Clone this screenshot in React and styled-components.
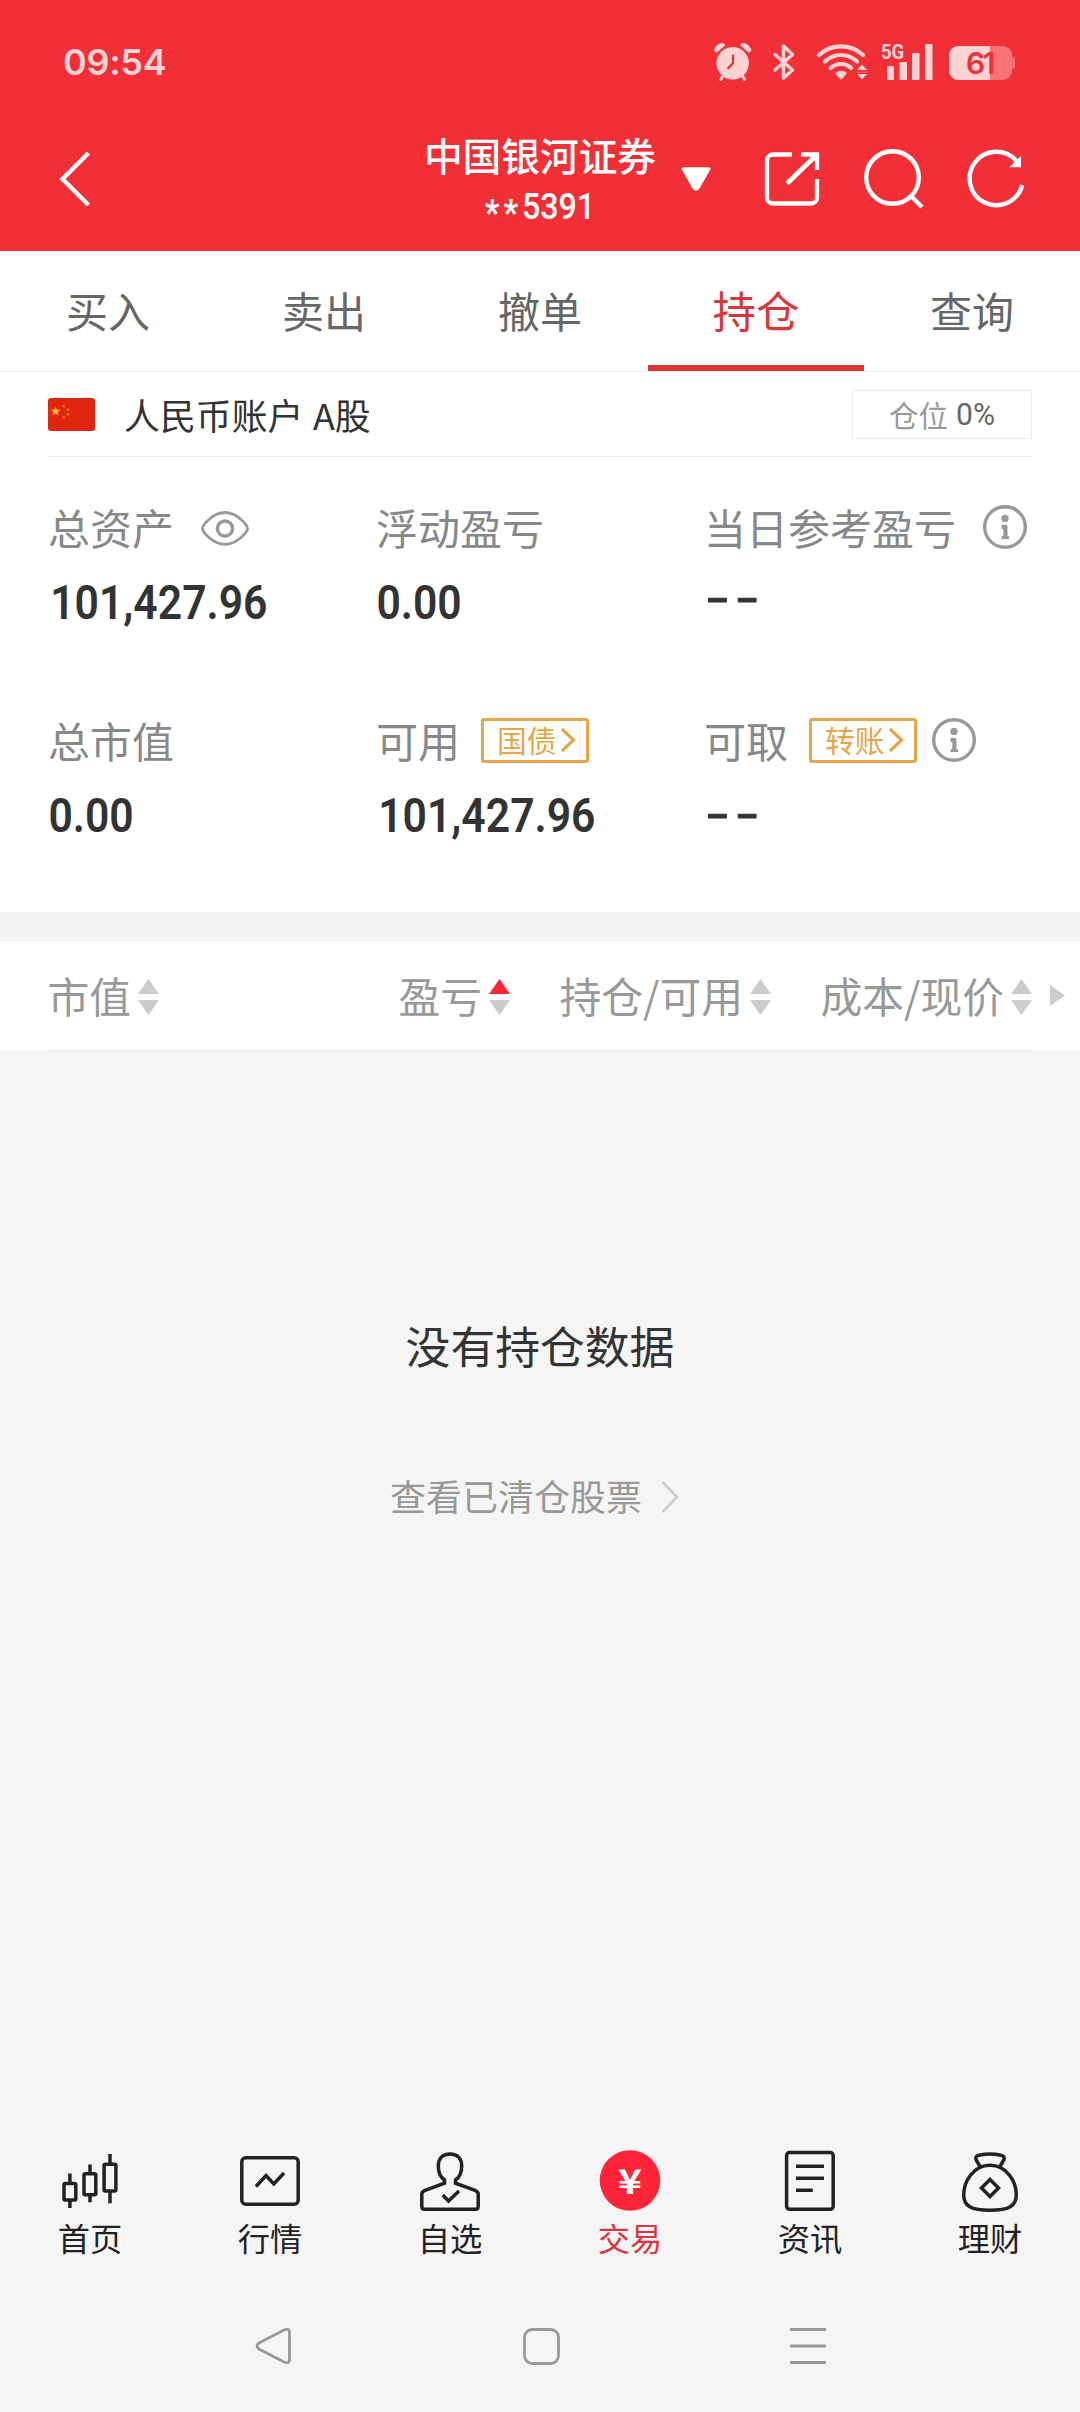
import React from "react";
import styled, { createGlobalStyle } from "styled-components";

const cjk = `"Noto Sans CJK SC", sans-serif`;
const latin = `Roboto, "Noto Sans CJK SC", sans-serif`;

const GlobalStyle = createGlobalStyle`
  *, *::before, *::after { box-sizing: border-box; }
  body { margin: 0; background: #f5f5f5; font-family: ${cjk}; }
  svg { display: block; flex: none; overflow: visible; }
`;

const Screen = styled.div`
  width: 1080px;
  height: 2412px;
  display: flex;
  flex-direction: column;
  background: #f5f5f5;
  overflow: hidden;
`;

/* ---------- header ---------- */
const Header = styled.header`
  height: 251px;
  background: #f22f37;
  color: #fff;
`;

const StatusBar = styled.div`
  height: 107px;
  padding: 17px 65px 0 63px;
  display: flex;
  align-items: center;
  color: #ffd2d4;
`;

const Clock = styled.span`
  flex: 1;
  font: 600 36px/44px Inter, sans-serif;
  letter-spacing: -0.3px;
`;

const StatusIcons = styled.div`
  display: flex;
  align-items: center;
  & > svg + svg { margin-left: 20px; }
`;

const Signal = styled.div`
  position: relative;
  width: 52px;
  height: 38px;
  margin-left: 15px;
`;

const NetworkType = styled.span`
  position: absolute;
  left: 0;
  top: -1px;
  font: 700 21px/20px Roboto, sans-serif;
  transform: scaleX(0.88);
  transform-origin: left;
`;

const Battery = styled.div`
  position: relative;
  width: 63px;
  height: 34px;
  margin: 2px 3px 0 16px;
  padding-right: 2px;
  border-radius: 9px;
  background: linear-gradient(to right, #ffd2d4 41px, #f87278 41px);
  color: #f22f37;
  font: 600 30px/35px Inter, sans-serif;
  letter-spacing: -2.5px;
  text-align: center;
  &::after {
    content: "";
    position: absolute;
    right: -3px;
    top: 11px;
    width: 3px;
    height: 12px;
    border-radius: 0 3px 3px 0;
    background: #f87278;
  }
`;

const NavRow = styled.div`
  height: 144px;
  padding: 0 51px 0 58px;
  display: flex;
  align-items: center;
`;

const AccountTitle = styled.div`
  width: 236px;
  margin: 2px 23px 0 330px;
  text-align: center;
`;

const BrokerName = styled.div`
  font: 500 38.7px/50px ${cjk};
  white-space: nowrap;
`;

const AccountNo = styled.div`
  margin-top: 3px;
  font: 500 36.8px/50px ${latin};
  transform: scaleX(0.875);
`;

const Mask = styled.span`
  font-weight: 700;
  letter-spacing: 4.5px;
  vertical-align: -6px;
  line-height: 1px;
`;

const NavActions = styled.div`
  display: flex;
  align-items: center;
  gap: 39px;
  margin-left: 52px;
`;

/* ---------- tabs ---------- */
const Tabs = styled.nav`
  height: 121px;
  display: grid;
  grid-template-columns: repeat(5, 1fr);
  background: #fff;
  border-bottom: 1px solid #ebebeb;
`;

const Tab = styled.div`
  padding-top: 28px;
  text-align: center;
  font-size: ${(p) => (p.$active ? 43.5 : 42)}px;
  line-height: 62px;
  color: ${(p) => (p.$active ? "#d93838" : "#666")};
  border-bottom: 6px solid ${(p) => (p.$active ? "#d93838" : "transparent")};
`;

/* ---------- account summary ---------- */
const Summary = styled.section`
  height: 540px;
  padding: 0 48px;
  background: #fff;
`;

const AccountRow = styled.div`
  height: 85px;
  display: flex;
  align-items: center;
  border-bottom: 1px solid #ebebeb;
`;

const AccountName = styled.span`
  flex: 1;
  margin-left: 29px;
  font-size: 35.9px;
  line-height: 50px;
  word-spacing: 1.5px;
  color: #333;
`;

const PositionBox = styled.div`
  width: 180px;
  height: 49px;
  border: 1px solid #ebebeb;
  padding-left: 36px;
  display: flex;
  align-items: center;
  gap: 8px;
  font-size: 29.5px;
  line-height: 40px;
  color: #999;
`;

const Percent = styled.span`
  font: 400 32px/40px ${latin};
  color: #666;
  transform: scaleX(0.94);
  transform-origin: left;
`;

const Metrics = styled.div`
  display: grid;
  grid-template-columns: repeat(3, 328px);
`;

const Metric = styled.div`
  height: 213px;
  padding-top: 47px;
`;

const MetricLabel = styled.div`
  height: 46px;
  display: flex;
  align-items: center;
  font-size: 42px;
  line-height: 46px;
  color: #888;
  white-space: nowrap;
`;

const LabelText = styled.span`
  width: ${(p) => (p.$width ? `${p.$width}px` : "auto")};
`;

const MetricValue = styled.div`
  margin-top: 24px;
  padding-left: ${(p) => (p.$indent ? 2.5 : 0.5)}px;
  font: 600 48.5px/58px ${latin};
  color: #333;
  transform: scaleX(0.88);
  transform-origin: left;
`;

const EmptyValue = styled.div`
  margin: ${(p) => p.$top}px 0 0 -6px;
  font: 400 48px/58px "Liberation Mono", monospace;
  letter-spacing: -6.8px;
  color: #333;
  -webkit-text-stroke: 0.8px #333;
  transform: scaleX(1.35);
  transform-origin: left;
`;

const Tag = styled.span`
  width: 108px;
  height: 45px;
  padding: 0 10px 0 13px;
  display: flex;
  align-items: center;
  justify-content: space-between;
  border: 3px solid #e5a549;
  border-radius: 3px;
  color: #e5a549;
  font-size: 29.8px;
  line-height: 36px;
`;

const TagText = styled.span`
  margin-top: -3px;
`;

const TagInfo = styled.span`
  margin-left: 15px;
`;

/* ---------- positions ---------- */
const Gap = styled.div`
  height: 30px;
  background: #f4f4f4;
`;

const ListHeader = styled.div`
  height: 109px;
  padding: 0 15px 0 48px;
  display: grid;
  grid-template-columns: 111px 351px 261px 261px 33px;
  align-items: center;
  background: linear-gradient(#ebebeb, #ebebeb) 48px 100% / 984px 1px no-repeat #fff;
`;

const Column = styled.div`
  display: flex;
  align-items: center;
  justify-content: flex-end;
  font-size: 41.8px;
  line-height: 60px;
  color: #999;
  white-space: nowrap;
`;

const ColumnText = styled.span`
  margin: -4px 7px 0 0;
`;

const Scroller = styled.div`
  justify-self: end;
  margin-bottom: 2px;
`;

const Empty = styled.main`
  flex: 1;
  padding-top: 264px;
  display: flex;
  flex-direction: column;
  align-items: center;
`;

const EmptyTitle = styled.div`
  font-size: 44.8px;
  line-height: 60px;
  color: #333;
`;

const HistoryLink = styled.div`
  margin-top: 90px;
  padding-right: 11px;
  display: flex;
  align-items: center;
  gap: 19px;
  font-size: 36px;
  line-height: 60px;
  color: #999;
  & > svg { margin-top: 4px; }
`;

/* ---------- bottom bars ---------- */
const TabBar = styled.nav`
  height: 108px;
  display: grid;
  grid-template-columns: repeat(6, 1fr);
`;

const TabBarItem = styled.div`
  display: flex;
  flex-direction: column;
  align-items: center;
  gap: 4px;
  font-size: 32.3px;
  line-height: 40px;
  color: ${(p) => (p.$active ? "#de3440" : "#222")};
`;

const SystemNav = styled.div`
  height: 155px;
  padding: 23px 254px 0 256px;
  display: flex;
  align-items: center;
  justify-content: space-between;
`;

/* ---------- icons ---------- */
const AlarmIcon = () => (
  <svg width="38" height="38" viewBox="0 0 38 38" fill="#ffd2d4">
    <circle cx="18.7" cy="20.3" r="16.2" />
    <path d="M0 7Q2 1 8 0 10.500 0 11.300 2.300L3 9.600Q.5 9.600 0 7ZM37.400 7Q35.400 1 29.400 0 26.900 0 26.100 2.300L34.400 9.600Q36.900 9.600 37.400 7Z" />
    <path d="M9 33 6.800 36.500M28.400 33l2.200 3.500" stroke="#ffd2d4" strokeWidth="3" strokeLinecap="round" />
    <path d="M19 12.500V20L14.200 25.200" fill="none" stroke="#f22f37" strokeWidth="2.200" strokeLinecap="round" />
  </svg>
);

const BluetoothIcon = () => (
  <svg width="24" height="38" viewBox="0 0 24 38" fill="none" stroke="#ffd2d4" strokeWidth="3.500" strokeLinejoin="round" strokeLinecap="round">
    <path d="M3 11.500 20.500 27 11.500 35V3L20.500 11.500 3 27" />
  </svg>
);

const WifiIcon = () => (
  <svg width="50" height="38" viewBox="0 0 50 38" fill="#ffd2d4">
    <g fill="none" stroke="#ffd2d4" strokeWidth="4.200" strokeLinecap="round">
      <path d="M3 12A32.600 32.600 0 0 1 47 12" />
      <path d="M9 18.500A23 23 0 0 1 41 18.500" />
      <path d="M14.800 25A15 15 0 0 1 35.200 25" />
    </g>
    <path d="M19 30Q25 25.500 31 30L25 37Z" />
    <path d="M46 21.500l5 5.500H41zM46 36.500l5-5.500H41z" />
    <path d="M41 29.200H51" stroke="#ffd2d4" strokeWidth="0.800" opacity="0.500" />
  </svg>
);

const SignalBars = () => (
  <svg width="52" height="38" viewBox="0 0 52 38" fill="#ffd2d4">
    <rect x="6" y="23" width="7" height="14" rx="1" />
    <rect x="18.500" y="19" width="7.500" height="18" rx="1" />
    <rect x="31" y="10" width="7.500" height="27" rx="1" />
    <rect x="44" y="1" width="7.500" height="36" rx="1" />
  </svg>
);

const BackIcon = () => (
  <svg width="34" height="58" viewBox="0 0 34 58" fill="none" stroke="#fff" strokeWidth="4.500">
    <path d="M30.500 3 4.500 29 30.500 55" />
  </svg>
);

const CaretIcon = () => (
  <svg width="30" height="24" viewBox="0 0 30 24" fill="#fff" stroke="#fff" strokeWidth="3" strokeLinejoin="round">
    <path d="M2 1.800H28L17 21Q15 23.500 13 21Z" />
  </svg>
);

const ShareIcon = () => (
  <svg width="60" height="60" viewBox="0 -1 60 60" fill="none" stroke="#fff" strokeWidth="4.300">
    <path d="M29 4.500H10a6 6 0 0 0-6 6V47.500a6 6 0 0 0 6 6H48a6 6 0 0 0 6-6V29" />
    <path d="M38 4.500H54V20" />
    <path d="M53 5.500 24 33.500" strokeWidth="4.800" />
    <path d="M46 5H54V13Z" fill="#fff" stroke="none" />
  </svg>
);

const SearchIcon = () => (
  <svg width="64" height="64" viewBox="0 0 64 64" fill="none" stroke="#fff" strokeWidth="4.400">
    <circle cx="30.500" cy="30.500" r="26.300" />
    <path d="M49 49 60 60" />
  </svg>
);

const RefreshIcon = () => (
  <svg width="64" height="64" viewBox="0 0 64 64" fill="none" stroke="#fff" strokeWidth="4.400">
    <path d="M57.200 38A26.700 26.700 0 1 1 51.500 14" />
    <path d="M56 9V20.300H44.200Z" fill="#fff" stroke="none" />
  </svg>
);

const FlagIcon = () => (
  <svg width="47" height="33" viewBox="0 0 47 33">
    <rect width="47" height="33" rx="3" fill="#df2710" />
    <path d="M7.600 8.500l1.200 3.300h3.500l-2.800 2.100 1 3.400-2.900-2-2.900 2 1-3.400-2.800-2.100h3.500z" fill="#ffc61a" />
    <g fill="#ef6a1c">
      <circle cx="15.700" cy="8.200" r="1.400" />
      <circle cx="20" cy="11.700" r="1.400" />
      <circle cx="20" cy="16.400" r="1.400" />
      <circle cx="15.700" cy="19.400" r="1.400" />
    </g>
  </svg>
);

const EyeIcon = () => (
  <svg width="50" height="38" viewBox="0 -1 50 38" fill="none" stroke="#999" strokeWidth="2.800">
    <path d="M2.500 19.500C2.500 16 13 3.500 25 3.500S47.500 16 47.500 19.500 37 35.300 25 35.300 2.500 23 2.500 19.500Z" />
    <circle cx="25" cy="19.500" r="7.600" strokeWidth="3.500" />
  </svg>
);

const InfoIcon = () => (
  <svg width="44" height="44" viewBox="0 0 44 44" fill="none" stroke="#999" strokeWidth="3.400">
    <circle cx="22" cy="22" r="20.300" />
    <circle cx="22" cy="13.400" r="3.700" fill="#999" stroke="none" />
    <path d="M18.500 21.800H22.400V33" strokeWidth="4.200" strokeLinejoin="round" />
    <path d="M18.500 32.600H26" strokeWidth="3" />
  </svg>
);

const TagChevron = () => (
  <svg width="16" height="26" viewBox="0 0 16 26" fill="none" stroke="#e5a549" strokeWidth="3.200">
    <path d="M2 2 13.500 13 2 24" />
  </svg>
);

const SortIcon = ({ up }) => (
  <svg width="21" height="36" viewBox="0 0 21 36" fill="#ccc">
    <path d="M10.500 0 21 15H0Z" fill={up ? "#ff2438" : "#ccc"} />
    <path d="M10.500 36 21 21H0Z" />
  </svg>
);

const MoreColumnsIcon = () => (
  <svg width="15" height="21" viewBox="0 0 15 21" fill="#ccc">
    <path d="M0 0 15 10.500 0 21Z" />
  </svg>
);

const LinkChevron = () => (
  <svg width="18" height="34" viewBox="0 0 18 34" fill="none" stroke="#ccc" strokeWidth="2.600">
    <path d="M1.500 2 16 17 1.500 32" />
  </svg>
);

const BarIcon = ({ children, ...rest }) => (
  <svg width="60" height="64" viewBox="0 0 60 64" fill="none" stroke="#222" strokeWidth="3.500" {...rest}>
    {children}
  </svg>
);

const HomeIcon = () => (
  <BarIcon>
    <rect x="4" y="34.500" width="11.800" height="16.500" rx="1.200" />
    <rect x="24" y="24.800" width="11.800" height="21" rx="1.200" />
    <rect x="44.100" y="15.200" width="11.800" height="26.800" rx="1.200" />
    <path d="M9.900 24.500V34M9.900 51.500V59M30 15.500V25M30 46V53.200M50 5V15M50 42.500V54.200" />
  </BarIcon>
);

const MarketIcon = () => (
  <BarIcon>
    <rect x="1.800" y="8.800" width="56.400" height="46.400" rx="4" />
    <path d="M16 37.500 26 26.500 33.800 35 44 24" />
  </BarIcon>
);

const WatchlistIcon = () => (
  <BarIcon>
    <path d="M24.500 34.200V31C20 28 18.300 22 18.300 17 18.300 9.500 22.500 5 30 5S41.700 9.500 41.700 17C41.700 22 40 28 35.500 31V34.200L55 41.300Q58.200 42.500 58.200 45V57.500Q58.200 60.200 55.500 60.200H4.500Q1.800 60.200 1.800 57.500V45Q1.800 42.500 5 41.300Z" />
    <path d="M22.800 46 28.500 52 39 42" />
  </BarIcon>
);

const TradeIcon = () => (
  <BarIcon stroke="none">
    <circle cx="30" cy="31.500" r="30.300" fill="#ff2438" />
    <text x="18" y="45" textLength="24" lengthAdjust="spacingAndGlyphs" fill="#fff" fontFamily="'Noto Sans CJK SC', sans-serif" fontWeight="700" fontSize="34">¥</text>
  </BarIcon>
);

const NewsIcon = () => (
  <BarIcon>
    <rect x="6.600" y="3.500" width="46.600" height="56.800" rx="3" />
    <path d="M16 17.300H44M16 29.300H44M16 41.200H32.800" />
  </BarIcon>
);

const WealthIcon = () => (
  <BarIcon>
    <path d="M30 16.300C47 16.300 56.300 33 56.300 46 56.300 57 49 61.300 30 61.300S3.700 57 3.700 46C3.700 33 13 16.300 30 16.300Z" />
    <path d="M20.300 18 16.200 11Q14.500 7 19 6.200 30 3.800 41 6.200 45.500 7 43.800 11L39.700 18" />
    <path d="M30 30.500 38.500 39 30 47.500 21.500 39Z" />
  </BarIcon>
);

const SysBack = () => (
  <svg width="36" height="36" viewBox="0 0 36 36" fill="none" stroke="#999" strokeWidth="2.800" strokeLinejoin="round">
    <path d="M2.500 15.300 28.500 1.800Q33.500 0 33.500 4.500V31.500Q33.500 36 28.500 34.200L2.500 20.700Q-.5 18 2.500 15.300Z" />
  </svg>
);

const SysHome = () => (
  <svg width="37" height="37" viewBox="0 0 37 37" fill="none" stroke="#999" strokeWidth="2.800">
    <rect x="1.500" y="1.500" width="34" height="34" rx="8" />
  </svg>
);

const SysMenu = () => (
  <svg width="36" height="36" viewBox="0 0 36 36" stroke="#999" strokeWidth="3">
    <path d="M0 1.500H36M0 18H36M0 34.500H36" />
  </svg>
);

const tabs = ["买入", "卖出", "撤单", "持仓", "查询"];
const columns = [{ name: "市值" }, { name: "盈亏", up: true }, { name: "持仓/可用" }, { name: "成本/现价" }];
const barItems = [
  { name: "首页", Icon: HomeIcon },
  { name: "行情", Icon: MarketIcon },
  { name: "自选", Icon: WatchlistIcon },
  { name: "交易", Icon: TradeIcon, active: true },
  { name: "资讯", Icon: NewsIcon },
  { name: "理财", Icon: WealthIcon },
];

export default function App() {
  return (
    <Screen>
      <GlobalStyle />
      <Header>
        <StatusBar>
          <Clock>09:54</Clock>
          <StatusIcons>
            <AlarmIcon />
            <BluetoothIcon />
            <WifiIcon />
            <Signal>
              <NetworkType>5G</NetworkType>
              <SignalBars />
            </Signal>
            <Battery>61</Battery>
          </StatusIcons>
        </StatusBar>
        <NavRow>
          <BackIcon />
          <AccountTitle>
            <BrokerName>中国银河证券</BrokerName>
            <AccountNo>
              <Mask>**</Mask>5391
            </AccountNo>
          </AccountTitle>
          <CaretIcon />
          <NavActions>
            <ShareIcon />
            <SearchIcon />
            <RefreshIcon />
          </NavActions>
        </NavRow>
      </Header>

      <Tabs>
        {tabs.map((t) => (
          <Tab key={t} $active={t === "持仓"}>{t}</Tab>
        ))}
      </Tabs>

      <Summary>
        <AccountRow>
          <FlagIcon />
          <AccountName>人民币账户 A股</AccountName>
          <PositionBox>
            仓位<Percent>0%</Percent>
          </PositionBox>
        </AccountRow>
        <Metrics>
          <Metric>
            <MetricLabel>
              <LabelText $width={152}>总资产</LabelText>
              <EyeIcon />
            </MetricLabel>
            <MetricValue $indent>101,427.96</MetricValue>
          </Metric>
          <Metric>
            <MetricLabel>
              <LabelText>浮动盈亏</LabelText>
            </MetricLabel>
            <MetricValue>0.00</MetricValue>
          </Metric>
          <Metric>
            <MetricLabel>
              <LabelText $width={279}>当日参考盈亏</LabelText>
              <InfoIcon />
            </MetricLabel>
            <EmptyValue $top={21}>--</EmptyValue>
          </Metric>
          <Metric>
            <MetricLabel>
              <LabelText>总市值</LabelText>
            </MetricLabel>
            <MetricValue>0.00</MetricValue>
          </Metric>
          <Metric>
            <MetricLabel>
              <LabelText $width={105}>可用</LabelText>
              <Tag>
                <TagText>国债</TagText>
                <TagChevron />
              </Tag>
            </MetricLabel>
            <MetricValue $indent>101,427.96</MetricValue>
          </Metric>
          <Metric>
            <MetricLabel>
              <LabelText $width={105}>可取</LabelText>
              <Tag>
                <TagText>转账</TagText>
                <TagChevron />
              </Tag>
              <TagInfo>
                <InfoIcon />
              </TagInfo>
            </MetricLabel>
            <EmptyValue $top={24}>--</EmptyValue>
          </Metric>
        </Metrics>
      </Summary>

      <Gap />

      <ListHeader>
        {columns.map((c) => (
          <Column key={c.name}>
            <ColumnText>{c.name}</ColumnText>
            <SortIcon up={c.up} />
          </Column>
        ))}
        <Scroller>
          <MoreColumnsIcon />
        </Scroller>
      </ListHeader>

      <Empty>
        <EmptyTitle>没有持仓数据</EmptyTitle>
        <HistoryLink>
          查看已清仓股票
          <LinkChevron />
        </HistoryLink>
      </Empty>

      <TabBar>
        {barItems.map(({ name, Icon, active }) => (
          <TabBarItem key={name} $active={active}>
            <Icon />
            {name}
          </TabBarItem>
        ))}
      </TabBar>
      <SystemNav>
        <SysBack />
        <SysHome />
        <SysMenu />
      </SystemNav>
    </Screen>
  );
}
